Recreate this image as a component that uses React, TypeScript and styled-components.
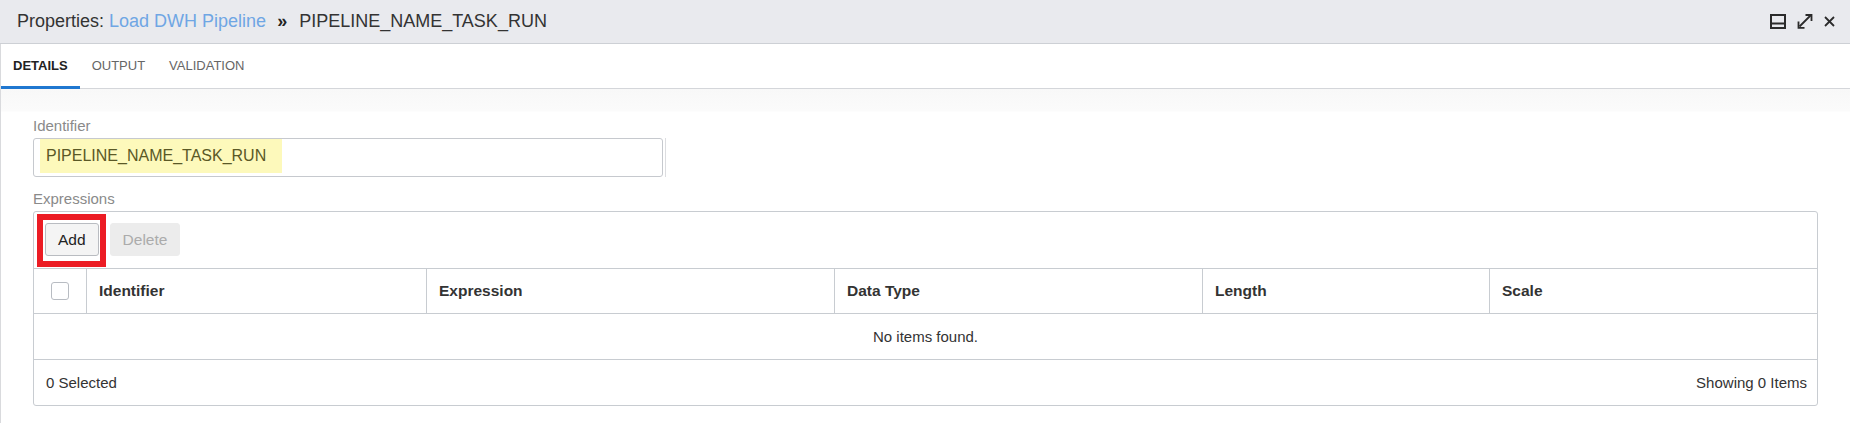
import React from "react";
import styled, { createGlobalStyle, css } from "styled-components";

const GlobalStyle = createGlobalStyle`
  html, body { margin: 0; padding: 0; background: #ffffff; }
  body { font-family: "Liberation Sans", Arial, sans-serif; color: #333; }
  * { box-sizing: border-box; }
`;

const Page = styled.div`
  width: 1850px;
  display: flex;
  flex-direction: column;
`;

const Header = styled.header`
  height: 44px;
  background: #e9eaee;
  border-bottom: 1px solid #cdd0d5;
  display: flex;
  align-items: center;
  justify-content: space-between;
  padding: 0 15px 0 17px;
`;

const Title = styled.div`
  font-size: 18px;
  color: #333;
  display: flex;
  align-items: center;
  white-space: nowrap;
  padding-bottom: 1px;
`;

const Crumb = styled.span`
  color: #6fa6e4;
  margin-left: 5px;
`;

const Sep = styled.span`
  font-weight: bold;
  color: #222;
  margin: 0 12px 0 11px;
`;

const HeaderActions = styled.div`
  display: flex;
  align-items: center;
  gap: 11px;
`;

const IconBtn = styled.span`
  display: inline-flex;
  align-items: center;
  justify-content: center;
  color: #2b2b2b;
`;

const Body = styled.div`
  height: 379px;
  border-left: 1px solid #d9dadd;
  display: flex;
  flex-direction: column;
`;

const TabBar = styled.nav`
  height: 45px;
  border-bottom: 1px solid #d4d6da;
  display: flex;
  align-items: stretch;
`;

const Tab = styled.div<{ $active?: boolean }>`
  padding: 0 12px;
  display: flex;
  align-items: center;
  font-size: 13px;
  color: #666;
  border-bottom: 3px solid transparent;
  padding-top: 1px;
  margin-bottom: -1px;
  ${(p) =>
    p.$active &&
    css`
      font-weight: bold;
      color: #222;
      border-bottom-color: #1f77d0;
    `}
`;

const Content = styled.div`
  flex: 1;
  padding: 27px 32px 0 32px;
  background: linear-gradient(#f8f8f8 0px, #fbfbfb 22px, #ffffff 23px);
  display: flex;
  flex-direction: column;
  align-items: flex-start;
`;

const FieldLabel = styled.label`
  font-size: 15px;
  line-height: 20px;
  color: #8a8a8a;
  margin-bottom: 2px;
`;

const InputWrap = styled.div`
  display: flex;
  padding-right: 2px;
  border-right: 1px solid #dcdde0;
  margin-bottom: 12px;
`;

const Input = styled.div`
  width: 630px;
  height: 39px;
  border: 1px solid #c6c9ce;
  border-radius: 3px;
  background: #fff;
  display: flex;
  align-items: stretch;
  padding: 0 0 3px 6px;
`;

const Highlight = styled.span`
  background: #fdf9bb;
  color: #5a5826;
  font-size: 16px;
  display: flex;
  align-items: center;
  padding: 0 16px 0 6px;
`;

const Table = styled.div`
  width: 100%;
  border: 1px solid #c8ccd1;
  border-radius: 3px;
  display: flex;
  flex-direction: column;
`;

const Toolbar = styled.div`
  height: 57px;
  padding: 11px 12px 0 11px;
  border-bottom: 1px solid #c8ccd1;
  display: flex;
  align-items: flex-start;
  gap: 11px;
`;

const Annotated = styled.div`
  position: relative;
  display: flex;
`;

const RedMark = styled.span`
  position: absolute;
  left: -8px;
  top: -9px;
  width: 69px;
  height: 53px;
  border: 6px solid #ec1c24;
  pointer-events: none;
`;

const Button = styled.button<{ $disabled?: boolean }>`
  height: 33px;
  padding: 0 12px;
  font-family: "Liberation Sans", Arial, sans-serif;
  font-size: 15.5px;
  border-radius: 3px;
  border: 1px solid #b9bcc1;
  background: #f4f4f4;
  color: #222;
  ${(p) =>
    p.$disabled &&
    css`
      border-color: #ececec;
      background: #ececec;
      color: #ababab;
    `}
`;

const Row = styled.div<{ $kind?: "head" | "empty" | "foot" }>`
  height: 45px;
  display: grid;
  grid-template-columns: 52px 340px 408px 368px 287px 1fr;
  border-bottom: 1px solid #c8ccd1;
  ${(p) =>
    p.$kind === "foot" &&
    css`
      border-bottom: none;
      height: 45px;
      display: flex;
      justify-content: space-between;
      align-items: center;
      padding: 0 10px 0 12px;
      font-size: 15px;
      color: #333;
    `}
  ${(p) =>
    p.$kind === "empty" &&
    css`
      height: 46px;
      display: flex;
      align-items: center;
      justify-content: center;
      font-size: 15px;
      color: #333;
    `}
`;

const HeadCell = styled.div<{ $check?: boolean }>`
  display: flex;
  align-items: center;
  padding-left: 12px;
  font-size: 15.5px;
  font-weight: bold;
  color: #333;
  & + & {
    border-left: 1px solid #c8ccd1;
  }
  ${(p) =>
    p.$check &&
    css`
      padding-left: 0;
      justify-content: center;
    `}
`;

const Checkbox = styled.span`
  width: 18px;
  height: 18px;
  border: 1px solid #b8bcc2;
  border-radius: 3px;
  background: #fff;
`;

const PanelIcon = () => (
  <svg width="16" height="15" viewBox="0 0 16 15" fill="none" stroke="currentColor" strokeWidth="2">
    <rect x="1" y="1" width="14" height="13" />
    <line x1="1" y1="9.5" x2="15" y2="9.5" />
  </svg>
);

const ExpandIcon = () => (
  <svg width="16" height="15" viewBox="0 0 16 15" fill="none" stroke="currentColor" strokeWidth="1.8">
    <line x1="2.5" y1="12.5" x2="13.5" y2="1.5" />
    <polyline points="8.5,1 14.5,1 14.5,7" />
    <polyline points="1.5,7.5 1.5,13.8 7.5,13.8" />
  </svg>
);

const CloseIcon = () => (
  <svg width="11" height="11" viewBox="0 0 11 11" fill="none" stroke="currentColor" strokeWidth="1.8">
    <line x1="1" y1="1" x2="10" y2="10" />
    <line x1="10" y1="1" x2="1" y2="10" />
  </svg>
);

const columns = ["Identifier", "Expression", "Data Type", "Length", "Scale"];

export default function App() {
  return (
    <Page>
      <GlobalStyle />
      <Header>
        <Title>
          Properties:<Crumb>Load DWH Pipeline</Crumb>
          <Sep>»</Sep>PIPELINE_NAME_TASK_RUN
        </Title>
        <HeaderActions>
          <IconBtn><PanelIcon /></IconBtn>
          <IconBtn><ExpandIcon /></IconBtn>
          <IconBtn><CloseIcon /></IconBtn>
        </HeaderActions>
      </Header>
      <Body>
        <TabBar>
          <Tab $active>DETAILS</Tab>
          <Tab>OUTPUT</Tab>
          <Tab>VALIDATION</Tab>
        </TabBar>
        <Content>
          <FieldLabel>Identifier</FieldLabel>
          <InputWrap>
            <Input>
              <Highlight>PIPELINE_NAME_TASK_RUN</Highlight>
            </Input>
          </InputWrap>
          <FieldLabel>Expressions</FieldLabel>
          <Table>
            <Toolbar>
              <Annotated>
                <Button>Add</Button>
                <RedMark />
              </Annotated>
              <Button $disabled>Delete</Button>
            </Toolbar>
            <Row $kind="head">
              <HeadCell $check>
                <Checkbox />
              </HeadCell>
              {columns.map((c) => (
                <HeadCell key={c}>{c}</HeadCell>
              ))}
            </Row>
            <Row $kind="empty">No items found.</Row>
            <Row $kind="foot">
              <span>0 Selected</span>
              <span>Showing 0 Items</span>
            </Row>
          </Table>
        </Content>
      </Body>
    </Page>
  );
}
